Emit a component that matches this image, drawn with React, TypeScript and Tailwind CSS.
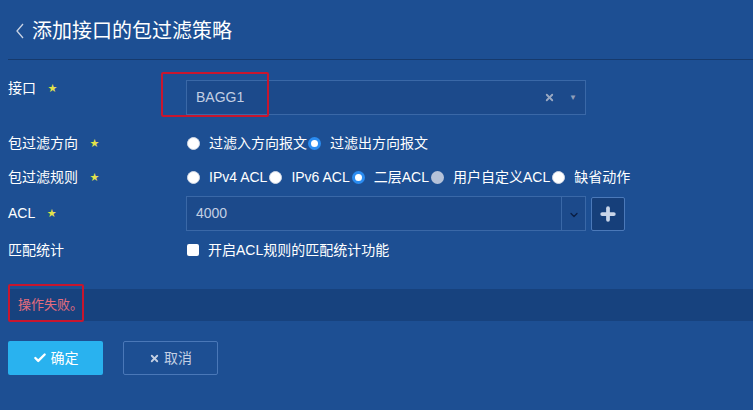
import { Check, X, Plus, ChevronDown } from "lucide-react"

const font = "font-['Microsoft_YaHei','Liberation_Sans','Noto_Sans_CJK_SC',sans-serif]"

function Star() {
  return <span className="ml-3 text-[9px] leading-none text-[#e3e34a]">★</span>
}

function Label({ text, star = true }: { text: string; star?: boolean }) {
  return (
    <div className="flex w-[186px] shrink-0 items-center pl-2 text-[14px] text-white">
      {text}
      {star && <Star />}
    </div>
  )
}

function Radio({ state }: { state: "off" | "on" | "disabled" }) {
  if (state === "on")
    return <span className="inline-block h-[13px] w-[13px] shrink-0 rounded-full border-[3px] border-[#2b8cf0] bg-white" />
  if (state === "disabled")
    return <span className="inline-block h-[13px] w-[13px] shrink-0 rounded-full bg-[#b5c2d9]" />
  return <span className="inline-block h-[13px] w-[13px] shrink-0 rounded-full border border-[#d0d8e6] bg-white" />
}

const directions = [
  { text: "过滤入方向报文", state: "off" },
  { text: "过滤出方向报文", state: "on" },
] as const

const rules = [
  { text: "IPv4 ACL", state: "off" },
  { text: "IPv6 ACL", state: "off" },
  { text: "二层ACL", state: "on" },
  { text: "用户自定义ACL", state: "disabled" },
  { text: "缺省动作", state: "off" },
] as const

export default function App() {
  return (
    <div className={`relative h-[410px] w-[753px] overflow-hidden bg-[#1d4f93] text-white ${font}`}>
      {/* header */}
      <div className="flex h-[59px] items-center pl-[15px] pt-[2px]">
        <svg width="10" height="16" viewBox="0 0 10 16" className="mr-[7px]">
          <polyline points="8,1 2,8 8,15" fill="none" stroke="#c9d3e4" strokeWidth="1.3" />
        </svg>
        <span className="text-[20px] leading-none">添加接口的包过滤策略</span>
      </div>
      <div className="ml-2 h-px bg-[#163a6d]" />

      {/* interface */}
      <div className="mt-[20px] flex items-start">
        <div className="flex w-[186px] shrink-0 items-center pl-2 text-[14px] leading-[16px]">
          接口
          <Star />
        </div>
        <div className="flex h-[35px] w-[400px] items-center border border-[#3a68a7] bg-[#1c4a8b] pl-[9px] pr-[8px]">
          <span className="flex-1 text-[14px] text-[#c3cfe3]">BAGG1</span>
          <X size={11} strokeWidth={4} className="mr-[14px] text-[#9aa9c2]" />
          <span className="text-[8px] text-[#8f9fba]">▼</span>
        </div>
      </div>

      {/* direction */}
      <div className="mt-[18px] flex h-[20px] items-center">
        <Label text="包过滤方向" />
        <div className="flex items-center pl-px text-[14px]">
          {directions.map((d) => (
            <div key={d.text} className="flex items-center">
              <Radio state={d.state} />
              <span className="ml-[9px] mr-px">{d.text}</span>
            </div>
          ))}
        </div>
      </div>

      {/* rules */}
      <div className="mt-[14px] flex h-[20px] items-center">
        <Label text="包过滤规则" />
        <div className="flex items-center pl-px text-[14px]">
          {rules.map((r) => (
            <div key={r.text} className="flex items-center">
              <Radio state={r.state} />
              <span className="ml-[9px] mr-[2px]">{r.text}</span>
            </div>
          ))}
        </div>
      </div>

      {/* acl */}
      <div className="mt-[9px] flex items-center">
        <Label text="ACL" />
        <div className="flex h-[35px] w-[400px] border border-[#3a68a7] bg-[#1c4a8b]">
          <span className="flex flex-1 items-center pl-[9px] text-[14px] text-[#c3cfe3]">4000</span>
          <div className="flex w-[24px] items-center justify-center border-l border-[#3a68a7] pt-[2px]">
            <ChevronDown size={12} strokeWidth={2.5} className="text-[#0a1d42]" />
          </div>
        </div>
        <div className="ml-[5px] flex h-[34px] w-[34px] items-center justify-center rounded-[2px] border border-[#4b79b9] bg-[#163f7a]">
          <Plus size={20} strokeWidth={4.5} className="text-[#c9d5e8]" />
        </div>
      </div>

      {/* stats */}
      <div className="mt-[9px] flex h-[20px] items-center">
        <Label text="匹配统计" star={false} />
        <span className="ml-px inline-block h-[12px] w-[12px] rounded-[2px] bg-white" />
        <span className="ml-[9px] text-[14px]">开启ACL规则的匹配统计功能</span>
      </div>

      {/* message */}
      <div className="ml-2 mt-[29px] flex h-[32px] items-center bg-[#17427e] pl-[10px] text-[13px] text-[#e36c7d]">
        操作失败。
      </div>

      {/* buttons */}
      <div className="ml-2 mt-[20px] flex gap-[20px]">
        <button className="flex h-[34px] w-[95px] items-center justify-center gap-[4px] rounded-[2px] bg-[#29b2ef] text-[14px] text-white">
          <Check size={14} strokeWidth={4} />
          确定
        </button>
        <button className="flex h-[34px] w-[95px] items-center justify-center gap-[4px] rounded-[2px] border border-[#4a78b8] text-[14px] text-[#c3cfe3]">
          <X size={11} strokeWidth={4} />
          取消
        </button>
      </div>

      {/* annotation boxes */}
      <div className="absolute left-[161px] top-[72px] h-[45px] w-[108px] rounded-[2px] border-2 border-[#c8162e]" />
      <div className="absolute left-[8px] top-[284px] h-[38px] w-[76px] rounded-[2px] border-2 border-[#c8162e]" />
    </div>
  )
}
